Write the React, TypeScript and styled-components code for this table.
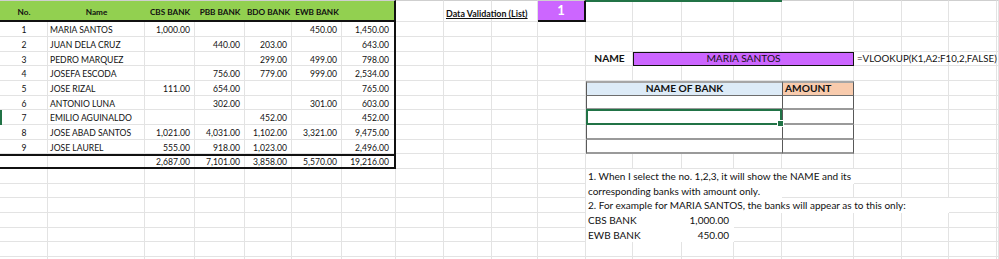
import React from 'react';
import styled, { createGlobalStyle, css } from 'styled-components';

const GlobalStyle = createGlobalStyle`
  html, body {
    margin: 0;
    padding: 0;
    background: #fff;
    overflow: hidden;
  }
  body {
    font-family: Lato, "Liberation Sans", sans-serif;
    color: #111;
  }
`;

// column widths of the visible sheet, last one fills the rest
const COLS = [48, 97, 50, 50, 47, 50, 54, 48, 48, 46, 48, 47, 49, 52, 48, 72, 48, 47, 48];
const ROWS = 18;
const GREEN = '#217346';
const PURPLE = '#cc66ff';

type Pos = { $r: number; $c: number; $rs?: number; $cs?: number };
type Align = 'left' | 'center' | 'right';

const placed = css<Pos>`
  grid-row: ${(p) => p.$r} / span ${(p) => p.$rs ?? 1};
  grid-column: ${(p) => p.$c} / span ${(p) => p.$cs ?? 1};
`;

const justify = (a?: Align) => (a === 'right' ? 'flex-end' : a === 'center' ? 'center' : 'flex-start');

const Sheet = styled.div`
  display: grid;
  grid-template-columns: ${COLS.map((w) => `${w}px`).join(' ')} 1fr;
  grid-template-rows: 22.33px repeat(${ROWS - 1}, 14.67px);
  width: 999px;
  height: 259px;
  overflow: hidden;
`;

const GridCell = styled.div<Pos & { $top?: boolean }>`
  ${placed};
  box-sizing: border-box;
  border-right: 1px solid #e3e3e3;
  border-bottom: 1px solid #e3e3e3;
  border-top: ${(p) => (p.$top ? '1px solid #cfcfcf' : 'none')};
`;

const Cell = styled.div<Pos & { $align?: Align; $edge?: boolean }>`
  ${placed};
  box-sizing: border-box;
  display: flex;
  align-items: flex-end;
  justify-content: ${(p) => justify(p.$align)};
  padding: 0 ${(p) => (p.$align === 'right' ? '5px' : '0')} 1px ${(p) => (p.$align === 'left' ? '2px' : '0')};
  font-size: 8.6px;
  line-height: 1.25;
  white-space: nowrap;
  border-right: ${(p) => (p.$edge ? '2px solid #111' : 'none')};
`;

const HeadCell = styled(Cell)`
  align-items: center;
  padding-top: 3px;
  background: #92d050;
  font-size: 8.2px;
  font-weight: 700;
  border-top: 1px solid #cfcfcf;
  border-bottom: 2px solid #111;
`;

const TotalCell = styled(Cell)`
  align-items: center;
  line-height: 1;
  padding-bottom: 0;
  padding-top: 1px;
  border-top: 2px solid #111;
  border-bottom: 2px solid #111;
`;

const RowMark = styled.div<Pos>`
  ${placed};
  border-left: 2px solid ${GREEN};
`;

const ColumnMark = styled.div<Pos>`
  ${placed};
  align-self: start;
  height: 2px;
  background: ${GREEN};
`;

const ValidationLabel = styled(Cell)`
  font-size: 8.9px;
  font-weight: 700;
  padding-bottom: 3px;
  span {
    text-decoration: underline;
    text-underline-offset: 1px;
  }
`;

const Picker = styled(Cell)`
  align-items: center;
  background: ${PURPLE};
  color: #fff;
  font-size: 13px;
  font-weight: 700;
  border-right: 2px solid #111;
  border-bottom: 2px solid #111;
  border-top: 1px solid #cfcfcf;
`;

const Label = styled(Cell)`
  font-size: 10.2px;
  font-weight: 700;
  align-items: center;
`;

const NameBox = styled(Cell)`
  align-items: center;
  background: ${PURPLE};
  font-size: 10.2px;
  border: 1.5px solid #111;
`;

const Formula = styled(Cell)`
  font-size: 9.7px;
  align-items: center;
  padding-left: 3px;
`;

const BankCell = styled(Cell)<{ $fill?: string; $head?: boolean }>`
  align-items: center;
  background: ${(p) => p.$fill ?? '#fff'};
  font-size: 10.2px;
  font-weight: ${(p) => (p.$head ? 700 : 400)};
  border-left: 1px solid #595959;
  border-right: ${(p) => (p.$edge ? '1px solid #595959' : 'none')};
  border-top: ${(p) => (p.$head ? '2px solid #a6a6a6' : 'none')};
  border-bottom: ${(p) => (p.$head ? '1px solid #6d6d6d' : '2px solid #9a9a9a')};
`;

const Selection = styled.div<Pos>`
  ${placed};
  position: relative;
  box-sizing: border-box;
  border: 2px solid ${GREEN};
  margin: -1px 0 0 0;

  &::after {
    content: '';
    position: absolute;
    right: -4px;
    bottom: -4px;
    width: 5px;
    height: 5px;
    background: ${GREEN};
    border: 1px solid #fff;
  }
`;

const Note = styled(Cell)`
  background: #fff;
  font-size: 10px;
  align-items: center;
  padding-bottom: 0;
`;

type Row = { no: number; name: string; vals: string[] };

const rows: Row[] = [
  { no: 1, name: 'MARIA SANTOS', vals: ['1,000.00', '', '', '450.00', '1,450.00'] },
  { no: 2, name: 'JUAN DELA CRUZ', vals: ['', '440.00', '203.00', '', '643.00'] },
  { no: 3, name: 'PEDRO MARQUEZ', vals: ['', '', '299.00', '499.00', '798.00'] },
  { no: 4, name: 'JOSEFA ESCODA', vals: ['', '756.00', '779.00', '999.00', '2,534.00'] },
  { no: 5, name: 'JOSE RIZAL', vals: ['111.00', '654.00', '', '', '765.00'] },
  { no: 6, name: 'ANTONIO LUNA', vals: ['', '302.00', '', '301.00', '603.00'] },
  { no: 7, name: 'EMILIO AGUINALDO', vals: ['', '', '452.00', '', '452.00'] },
  { no: 8, name: 'JOSE ABAD SANTOS', vals: ['1,021.00', '4,031.00', '1,102.00', '3,321.00', '9,475.00'] },
  { no: 9, name: 'JOSE LAUREL', vals: ['555.00', '918.00', '1,023.00', '', '2,496.00'] },
];

const totals = ['2,687.00', '7,101.00', '3,858.00', '5,570.00', '19,216.00'];
const heads = ['No.', 'Name', 'CBS BANK', 'PBB BANK', 'BDO BANK', 'EWB BANK', ''];

const App = () => {
  const grid = [];
  for (let r = 1; r <= ROWS; r++) {
    for (let c = 1; c <= COLS.length + 1; c++) {
      grid.push(<GridCell key={`g${r}-${c}`} $r={r} $c={c} $top={r === 1} />);
    }
  }

  return (
    <>
      <GlobalStyle />
      <Sheet>
        {grid}

        {/* source table */}
        {heads.map((h, i) => (
          <HeadCell key={`h${i}`} $r={1} $c={i + 1} $align="center" $edge={i === 6}>
            {h}
          </HeadCell>
        ))}
        {rows.map((row, i) => (
          <React.Fragment key={row.no}>
            <Cell $r={i + 2} $c={1} $align="center">
              {row.no}
            </Cell>
            <Cell $r={i + 2} $c={2} $align="left">
              {row.name}
            </Cell>
            {row.vals.map((v, j) => (
              <Cell key={j} $r={i + 2} $c={j + 3} $align="right" $edge={j === 4}>
                {v}
              </Cell>
            ))}
          </React.Fragment>
        ))}
        <TotalCell $r={11} $c={1} />
        <TotalCell $r={11} $c={2} />
        {totals.map((t, j) => (
          <TotalCell key={`t${j}`} $r={11} $c={j + 3} $align="right" $edge={j === 4}>
            {t}
          </TotalCell>
        ))}
        <RowMark $r={8} $c={1} />
        <ColumnMark $r={1} $c={12} $cs={4} />

        {/* lookup side */}
        <ValidationLabel $r={1} $c={9} $cs={2} $align="left">
          <span>Data Validation (List)</span>
        </ValidationLabel>
        <Picker $r={1} $c={11} $align="center">
          1
        </Picker>

        <Label $r={4} $c={12} $align="center">
          NAME
        </Label>
        <NameBox $r={4} $c={13} $cs={4} $align="center">
          MARIA SANTOS
        </NameBox>
        <Formula $r={4} $c={17} $cs={4}>
          =VLOOKUP(K1,A2:F10,2,FALSE)
        </Formula>

        <BankCell $r={6} $c={12} $cs={4} $align="center" $fill="#ddebf7" $head>
          NAME OF BANK
        </BankCell>
        <BankCell $r={6} $c={16} $align="left" $fill="#f8cbad" $head $edge>
          AMOUNT
        </BankCell>
        {[7, 8, 9, 10].map((r) => (
          <React.Fragment key={`b${r}`}>
            <BankCell $r={r} $c={12} $cs={4} />
            <BankCell $r={r} $c={16} $edge />
          </React.Fragment>
        ))}
        <Selection $r={8} $c={12} $cs={4} />

        <Note $r={12} $c={12} $cs={5} $align="left">
          1. When I select the no. 1,2,3, it will show the NAME and its
        </Note>
        <Note $r={13} $c={12} $cs={4} $align="left">
          corresponding banks with amount only.
        </Note>
        <Note $r={14} $c={12} $cs={7} $align="left">
          2. For example for MARIA SANTOS, the banks will appear as to this only:
        </Note>
        <Note $r={15} $c={12} $cs={2} $align="left">
          CBS BANK
        </Note>
        <Note $r={15} $c={14} $align="right">
          1,000.00
        </Note>
        <Note $r={16} $c={12} $cs={2} $align="left">
          EWB BANK
        </Note>
        <Note $r={16} $c={14} $align="right">
          450.00
        </Note>
      </Sheet>
    </>
  );
};

export default App;
